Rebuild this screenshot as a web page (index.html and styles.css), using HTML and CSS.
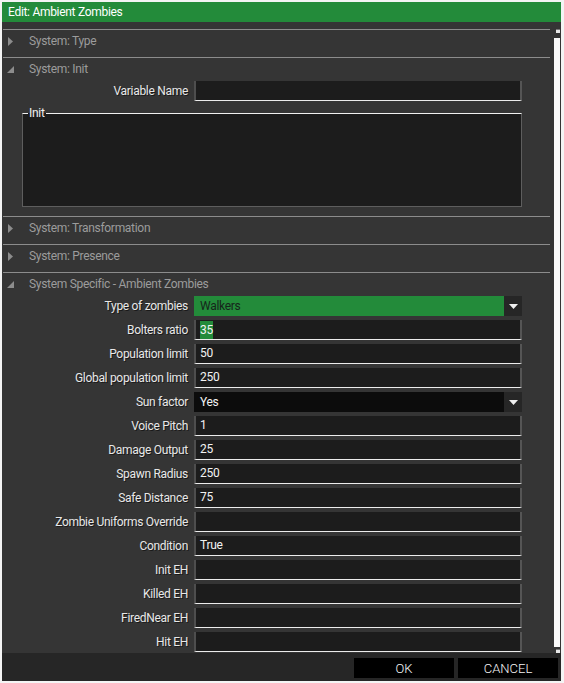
FILE: index.html
```html
<!DOCTYPE html>
<html lang="en">
<head>
    <meta charset="UTF-8">
    <meta name="viewport" content="width=device-width, initial-scale=1.0">
    <title>Edit: Ambient Zombies</title>
    <link rel="stylesheet" href="styles.css">
</head>
<body>

    <div class="window">

        <div class="titlebar">Edit: Ambient Zombies</div>

        <div class="body">
            <div class="scroll">

                <div class="section collapsed">
                    <div class="section-head">
                        <svg class="arrow" width="6" height="9" viewBox="0 0 6 9"><path d="M0 0L5 4.5L0 9Z"/></svg>
                        System: Type
                    </div>
                </div>

                <div class="section init">
                    <div class="section-head">
                        <svg class="arrow" width="8" height="8" viewBox="0 0 8 8"><path d="M7 0L7 7L0 7Z"/></svg>
                        System: Init
                    </div>
                    <div class="section-body">
                        <div class="row">
                            <label>Variable Name</label>
                            <div class="field"></div>
                        </div>
                        <fieldset class="init-box">
                            <legend>Init</legend>
                            <div class="init-area"></div>
                        </fieldset>
                    </div>
                </div>

                <div class="section collapsed">
                    <div class="section-head">
                        <svg class="arrow" width="6" height="9" viewBox="0 0 6 9"><path d="M0 0L5 4.5L0 9Z"/></svg>
                        System: Transformation
                    </div>
                </div>

                <div class="section collapsed">
                    <div class="section-head">
                        <svg class="arrow" width="6" height="9" viewBox="0 0 6 9"><path d="M0 0L5 4.5L0 9Z"/></svg>
                        System: Presence
                    </div>
                </div>

                <div class="section">
                    <div class="section-head">
                        <svg class="arrow" width="8" height="8" viewBox="0 0 8 8"><path d="M7 0L7 7L0 7Z"/></svg>
                        System Specific - Ambient Zombies
                    </div>
                    <div class="section-body rows">
                        <div class="row">
                            <label>Type of zombies</label>
                            <div class="combo green"><span class="combo-value">Walkers</span><span class="combo-btn"><svg width="9" height="5" viewBox="0 0 9 5"><path d="M0 0L9 0L4.5 5Z"/></svg></span></div>
                        </div>
                        <div class="row">
                            <label>Bolters ratio</label>
                            <div class="field"><span class="selected">35</span></div>
                        </div>
                        <div class="row">
                            <label>Population limit</label>
                            <div class="field">50</div>
                        </div>
                        <div class="row">
                            <label>Global population limit</label>
                            <div class="field">250</div>
                        </div>
                        <div class="row">
                            <label>Sun factor</label>
                            <div class="combo black"><span class="combo-value">Yes</span><span class="combo-btn"><svg width="9" height="5" viewBox="0 0 9 5"><path d="M0 0L9 0L4.5 5Z"/></svg></span></div>
                        </div>
                        <div class="row">
                            <label>Voice Pitch</label>
                            <div class="field">1</div>
                        </div>
                        <div class="row">
                            <label>Damage Output</label>
                            <div class="field">25</div>
                        </div>
                        <div class="row">
                            <label>Spawn Radius</label>
                            <div class="field">250</div>
                        </div>
                        <div class="row">
                            <label>Safe Distance</label>
                            <div class="field">75</div>
                        </div>
                        <div class="row">
                            <label>Zombie Uniforms Override</label>
                            <div class="field"></div>
                        </div>
                        <div class="row">
                            <label>Condition</label>
                            <div class="field">True</div>
                        </div>
                        <div class="row">
                            <label>Init EH</label>
                            <div class="field"></div>
                        </div>
                        <div class="row">
                            <label>Killed EH</label>
                            <div class="field"></div>
                        </div>
                        <div class="row">
                            <label>FiredNear EH</label>
                            <div class="field"></div>
                        </div>
                        <div class="row">
                            <label>Hit EH</label>
                            <div class="field"></div>
                        </div>
                    </div>
                </div>

            </div>

            <div class="scrollbar">
                <span class="sb-btn"></span>
                <span class="sb-thumb"></span>
                <span class="sb-btn"></span>
            </div>
        </div>

        <div class="footer">
            <button class="btn">OK</button>
            <button class="btn">CANCEL</button>
        </div>

    </div>

</body>
</html>
```

FILE: styles.css
```css
body {
    margin: 0;
    background: #f4f4f4;
    font-family: Roboto, "Liberation Sans", sans-serif;
    font-size: 12px;
    letter-spacing: -0.3px;
}
.window {
    margin: 2px 3px 2px 2px;
    height: 679px;
    display: flex;
    flex-direction: column;
    background: #353535;
}
.titlebar {
    height: 20px;
    line-height: 20px;
    padding-left: 6px;
    background: #238b3a;
    color: #fff;
    flex-shrink: 0;
}
.body {
    height: 631px;
    display: flex;
}
.scroll {
    flex: 1;
    overflow: hidden;
    padding-top: 7px;
    margin-right: 2px;
}
.section {
    margin-left: 1px;
    border-top: 1px solid #8c8c8c;
}
.section.collapsed {
    padding-bottom: 5px;
}
.section.init {
    padding-bottom: 9px;
}
.section-head {
    height: 22px;
    line-height: 22px;
    padding-left: 26px;
    color: #9c9c9c;
    position: relative;
}
.section-head .arrow {
    position: absolute;
    left: 4px;
    top: 8px;
    fill: #8c8c8c;
}
.section.collapsed .section-head .arrow {
    left: 5px;
    top: 7px;
}
.section-body {
    padding-top: 1px;
}
.rows {
    display: flex;
    flex-direction: column;
    gap: 4px;
}
.row {
    display: grid;
    grid-template-columns: 185px 328px;
    column-gap: 6px;
    height: 20px;
}
.row label {
    text-align: right;
    line-height: 20px;
    color: #e8e8e8;
    text-shadow: 1px 1px 0 #1a1a1a;
}
.field {
    box-sizing: border-box;
    height: 20px;
    background: #1c1c1c;
    border-left: 2px solid #4e4e4e;
    border-right: 2px solid #555;
    border-bottom: 1px solid #ececec;
    color: #f2f2f2;
    padding-left: 4px;
    line-height: 19px;
}
.field .selected {
    display: inline-block;
    background: #238b3a;
    height: 18px;
    line-height: 18px;
    margin-top: 1px;
    vertical-align: top;
}
.combo {
    display: flex;
    height: 20px;
}
.combo-value {
    flex: 1;
    padding-left: 6px;
    line-height: 20px;
}
.combo-btn {
    width: 18px;
    display: flex;
    align-items: center;
    justify-content: center;
    background: #262626;
}
.combo-btn svg {
    fill: #f0f0f0;
}
.combo.green .combo-value {
    background: #238b3a;
    color: #16251a;
}
.combo.black .combo-value {
    background: #0c0c0c;
    color: #f2f2f2;
}
.init-box {
    margin: 5px 0 0 19px;
    padding: 0;
    width: 500px;
    box-sizing: border-box;
    border: 1px solid #5e5e5e;
    border-top-color: #f0f0f0;
    background: #1c1c1c;
    min-width: 0;
}
.init-box legend {
    margin-left: 5px;
    padding: 0 1px;
    line-height: 14px;
    color: #f0f0f0;
}
.init-area {
    height: 86px;
}
.scrollbar {
    width: 9px;
    display: flex;
    flex-direction: column;
    align-items: flex-end;
    padding-top: 7px;
}
.sb-btn {
    display: block;
    width: 4px;
    height: 4px;
    margin-right: 1px;
    background: #e8e8e8;
    border-top: 1px solid #777;
    box-sizing: border-box;
}
.sb-thumb {
    display: block;
    width: 6px;
    height: 609px;
    margin: 5px 1px 2px 0;
    background: #fafafa;
}
.footer {
    height: 28px;
    flex-shrink: 0;
    background: #262626;
    display: flex;
    justify-content: flex-end;
    gap: 4px;
    padding: 5px 3px 0 0;
    box-sizing: border-box;
}
.btn {
    width: 100px;
    height: 20px;
    border: none;
    background: #000;
    color: #f4f4f4;
    font-family: Roboto, "Liberation Sans", sans-serif;
    font-size: 13px;
    font-weight: 300;
    letter-spacing: 0;
    padding: 0;
}
```
